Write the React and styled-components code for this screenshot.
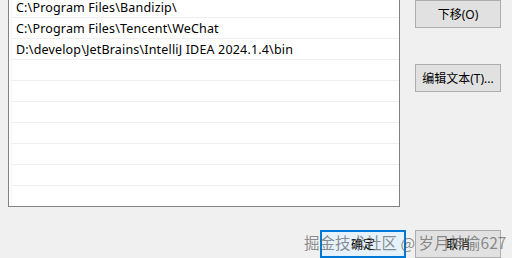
import React from "react";
import styled, { createGlobalStyle } from "styled-components";

const Global = createGlobalStyle`
  html, body { margin: 0; padding: 0; background: #f0f0f0; }
  body { overflow: hidden; }
`;

const Window = styled.div`
  position: relative;
  width: 512px;
  height: 258px;
  box-sizing: border-box;
  padding-left: 8px;
  background: #f0f0f0;
  overflow: hidden;
  font-family: "Noto Sans", "Noto Sans CJK SC", sans-serif;
  font-size: 12px;
  color: #000;
`;

const Top = styled.div`
  display: flex;
  align-items: flex-start;
  gap: 15px;
  margin-top: -4px;
`;

const ListBox = styled.div`
  width: 392px;
  height: 211px;
  box-sizing: border-box;
  border: 1px solid #828282;
  background: #fff;
  padding-left: 3px;
  box-shadow: inset 2px 0 0 #fff, inset 3px 0 0 #f4f4f4;
  overflow: hidden;
`;

const Row = styled.div`
  box-sizing: content-box;
  height: 19px;
  padding-top: 1px;
  padding-left: 4px;
  border-bottom: 1px solid #efefef;
  white-space: nowrap;
  font-size: 12.5px;
  letter-spacing: 0.17px;
  line-height: 20px;
`;

const Side = styled.div`
  display: flex;
  flex-direction: column;
  gap: 36px;
  padding-top: 4px;
`;

const Button = styled.div`
  width: 86px;
  height: 28px;
  box-sizing: border-box;
  display: flex;
  align-items: center;
  justify-content: center;
  background: ${(p) => (p.$primary ? "#e5f1fb" : "#e1e1e1")};
  border: ${(p) => (p.$primary ? "2px solid #0078d7" : "1px solid #adadad")};
  font-family: "Noto Sans", "Noto Sans CJK SC", sans-serif;
  font-size: 12px;
  white-space: nowrap;
`;

const Footer = styled.div`
  display: flex;
  justify-content: flex-end;
  gap: 9px;
  padding-right: 11px;
  margin-top: 23px;
`;

const Watermark = styled.div`
  position: absolute;
  left: 304px;
  top: 232px;
  font-family: "Noto Sans CJK SC", sans-serif;
  font-size: 15.5px;
  line-height: 20px;
  color: rgba(100, 100, 100, 0.72);
  white-space: nowrap;
  pointer-events: none;
`;

const paths = [
  "C:\\Program Files\\Bandizip\\",
  "C:\\Program Files\\Tencent\\WeChat",
  "D:\\develop\\JetBrains\\IntelliJ IDEA 2024.1.4\\bin",
  "",
  "",
  "",
  "",
  "",
  "",
];

export default function App() {
  return (
    <>
      <Global />
      <Window>
        <Top>
          <ListBox>
            {paths.map((p, i) => (
              <Row key={i}>{p}</Row>
            ))}
          </ListBox>
          <Side>
            <Button>下移(O)</Button>
            <Button>编辑文本(T)...</Button>
          </Side>
        </Top>
        <Footer>
          <Button $primary>确定</Button>
          <Button>取消</Button>
        </Footer>
        <Watermark>掘金技术社区 @ 岁月神偷627</Watermark>
      </Window>
    </>
  );
}
